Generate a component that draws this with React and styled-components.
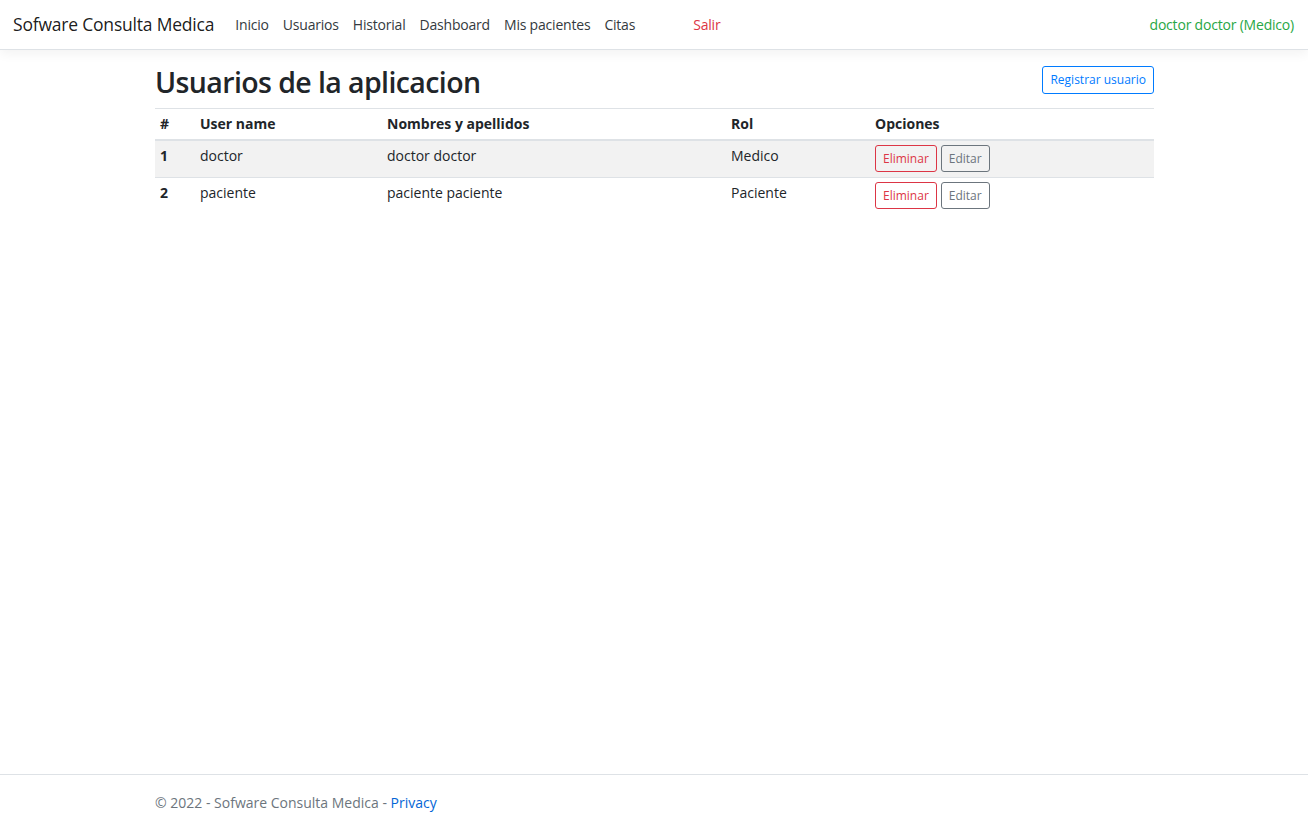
import React from "react";
import styled, { createGlobalStyle } from "styled-components";

const GlobalStyle = createGlobalStyle`
  *, *::before, *::after {
    box-sizing: border-box;
  }
  html, body {
    margin: 0;
    padding: 0;
  }
  body {
    font-family: "Open Sans", "Noto Sans", sans-serif;
    font-size: 14px;
    line-height: 1.5;
    color: #212529;
    background: #ffffff;
  }
`;

const Page = styled.div`
  display: flex;
  flex-direction: column;
  min-height: 100vh;
`;

const Navbar = styled.header`
  display: flex;
  align-items: center;
  height: 50px;
  padding: 7px 14px 7px 13px;
  background: #ffffff;
  border-bottom: 1px solid #dee2e6;
  box-shadow: 0 3.5px 10.5px rgba(0, 0, 0, 0.05);
`;

const Brand = styled.a`
  font-size: 17.5px;
  letter-spacing: -0.2px;
  color: rgba(0, 0, 0, 0.9);
  margin-right: 14px;
  white-space: nowrap;
  text-decoration: none;
`;

const NavList = styled.nav`
  display: flex;
  align-items: center;
  flex: 1;
`;

const NavLink = styled.a`
  padding: 7px;
  letter-spacing: -0.2px;
  color: ${(p) => p.$color || "#343a40"};
  margin-left: ${(p) => p.$gap || 0}px;
  text-decoration: none;
  white-space: nowrap;
`;

const UserName = styled.span`
  color: #28a745;
  letter-spacing: -0.2px;
  white-space: nowrap;
`;

const Main = styled.main`
  flex: 1;
  width: 1030px;
  margin: 14px auto 0;
  padding: 0 15px 0 16px;
`;

const TitleRow = styled.div`
  display: flex;
  justify-content: space-between;
  align-items: flex-start;
`;

const Title = styled.h1`
  margin: 0 0 8px;
  font-size: 28.5px;
  font-weight: 600;
  line-height: 36px;
  letter-spacing: -0.6px;
`;

const OutlineButton = styled.button`
  font-family: inherit;
  font-size: 12px;
  line-height: 18px;
  padding: ${(p) => (p.$tall ? "4px" : "3.5px")} 7px;
  background: transparent;
  border: 1px solid ${(p) => p.$color};
  color: ${(p) => p.$color};
  border-radius: 3px;
  cursor: pointer;
  margin-top: ${(p) => p.$top || 0}px;
`;

const Table = styled.table`
  width: 100%;
  border-collapse: collapse;
`;

const Th = styled.th`
  text-align: left;
  padding: 4px 5px 5px;
  font-weight: 700;
  border-top: 1px solid #dee2e6;
  border-bottom: 2px solid #dee2e6;
  width: ${(p) => p.$w}px;
`;

const Row = styled.tr`
  background: ${(p) => (p.$striped ? "rgba(0, 0, 0, 0.05)" : "transparent")};
`;

const Td = styled.td`
  padding: 4px 5px 5px;
  vertical-align: top;
  border-top: 1px solid #dee2e6;
  font-weight: ${(p) => (p.$bold ? 700 : 400)};
`;

const Options = styled.div`
  display: flex;
  gap: 4px;
`;

const Footer = styled.footer`
  height: 54px;
  border-top: 1px solid #dee2e6;
  color: #6c757d;
  white-space: nowrap;
`;

const FooterInner = styled.div`
  width: 1030px;
  margin: 0 auto;
  padding: 17px 15px 0 16px;
`;

const FooterLink = styled.a`
  color: #0366d6;
  text-decoration: none;
`;

const users = [
  { id: 1, user: "doctor", name: "doctor doctor", role: "Medico" },
  { id: 2, user: "paciente", name: "paciente paciente", role: "Paciente" },
];

const App = () => {
  return (
    <Page>
      <GlobalStyle />
      <Navbar>
        <Brand>Sofware Consulta Medica</Brand>
        <NavList>
          <NavLink>Inicio</NavLink>
          <NavLink>Usuarios</NavLink>
          <NavLink>Historial</NavLink>
          <NavLink>Dashboard</NavLink>
          <NavLink>Mis pacientes</NavLink>
          <NavLink>Citas</NavLink>
          <NavLink $color="#dc3545" $gap={44}>
            Salir
          </NavLink>
        </NavList>
        <UserName>doctor doctor (Medico)</UserName>
      </Navbar>

      <Main>
        <TitleRow>
          <Title>Usuarios de la aplicacion</Title>
          <OutlineButton $color="#007bff" $top={2} $tall>
            Registrar usuario
          </OutlineButton>
        </TitleRow>
        <Table>
          <thead>
            <tr>
              <Th $w={40}>#</Th>
              <Th $w={187}>User name</Th>
              <Th $w={344}>Nombres y apellidos</Th>
              <Th $w={144}>Rol</Th>
              <Th>Opciones</Th>
            </tr>
          </thead>
          <tbody>
            {users.map((u, i) => (
              <Row key={u.id} $striped={i % 2 === 0}>
                <Td $bold>{u.id}</Td>
                <Td>{u.user}</Td>
                <Td>{u.name}</Td>
                <Td>{u.role}</Td>
                <Td>
                  <Options>
                    <OutlineButton $color="#dc3545">Eliminar</OutlineButton>
                    <OutlineButton $color="#6c757d">Editar</OutlineButton>
                  </Options>
                </Td>
              </Row>
            ))}
          </tbody>
        </Table>
      </Main>

      <Footer>
        <FooterInner>
          © 2022 - Sofware Consulta Medica - <FooterLink>Privacy</FooterLink>
        </FooterInner>
      </Footer>
    </Page>
  );
};

export default App;
